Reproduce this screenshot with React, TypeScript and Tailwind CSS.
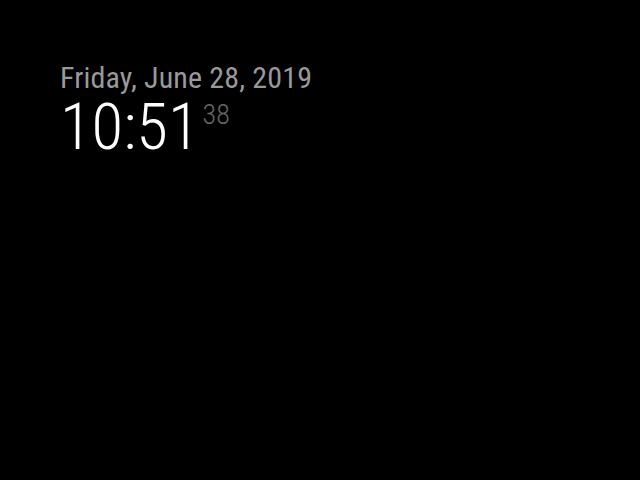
export default function App() {
  return (
    <div className="min-h-[480px] w-[640px] bg-black p-[60px] font-['Roboto_Condensed','Roboto',sans-serif]">
      <div className="text-[30px] leading-[35px] tracking-[0.15px] text-[#999]">Friday, June 28, 2019</div>
      <div className="text-[65px] font-light leading-[65px] text-white">
        10:51
        <span className="ml-[3px] align-[25px] text-[28px] leading-none text-[#666]">38</span>
      </div>
    </div>
  )
}
